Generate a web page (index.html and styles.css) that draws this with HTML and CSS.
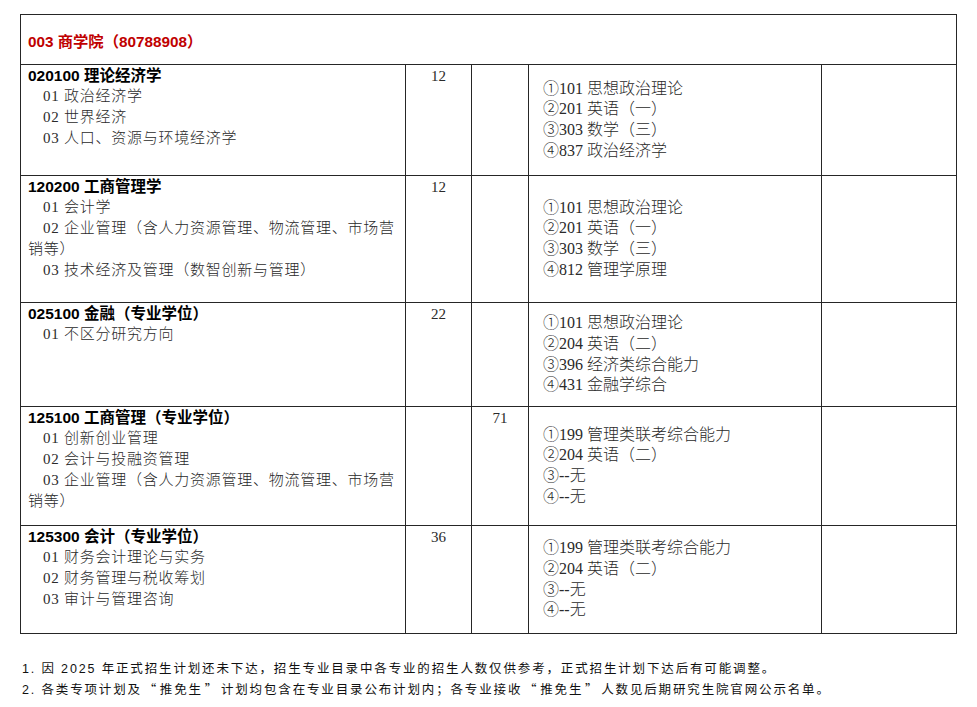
FILE: index.html
```html
<!DOCTYPE html>
<html lang="zh-CN">
<head>
<meta charset="utf-8">
<title>003 商学院</title>
<link rel="stylesheet" href="styles.css">
</head>
<body>
<div class="page">
<table class="plan">
  <colgroup>
    <col class="c-major"><col class="c-num"><col class="c-num2"><col class="c-exam"><col class="c-note">
  </colgroup>
  <tr class="head-row">
    <td colspan="5" class="dept">003 商学院（80788908）</td>
  </tr>
  <tr class="r1">
    <td class="major">
      <div class="mname">020100 理论经济学</div>
      <div class="dir">01 政治经济学</div>
      <div class="dir">02 世界经济</div>
      <div class="dir">03 人口、资源与环境经济学</div>
    </td>
    <td class="num">12</td>
    <td class="num"></td>
    <td class="exam">
      <div>①101 思想政治理论</div>
      <div>②201 英语（一）</div>
      <div>③303 数学（三）</div>
      <div>④837 政治经济学</div>
    </td>
    <td></td>
  </tr>
  <tr class="r2">
    <td class="major">
      <div class="mname">120200 工商管理学</div>
      <div class="dir">01 会计学</div>
      <div class="dir">02 企业管理（含人力资源管理、物流管理、市场营<br>销等）</div>
      <div class="dir">03 技术经济及管理（数智创新与管理）</div>
    </td>
    <td class="num">12</td>
    <td class="num"></td>
    <td class="exam">
      <div>①101 思想政治理论</div>
      <div>②201 英语（一）</div>
      <div>③303 数学（三）</div>
      <div>④812 管理学原理</div>
    </td>
    <td></td>
  </tr>
  <tr class="r3">
    <td class="major">
      <div class="mname">025100 金融（专业学位）</div>
      <div class="dir">01 不区分研究方向</div>
    </td>
    <td class="num">22</td>
    <td class="num"></td>
    <td class="exam">
      <div>①101 思想政治理论</div>
      <div>②204 英语（二）</div>
      <div>③396 经济类综合能力</div>
      <div>④431 金融学综合</div>
    </td>
    <td></td>
  </tr>
  <tr class="r4">
    <td class="major">
      <div class="mname">125100 工商管理（专业学位）</div>
      <div class="dir">01 创新创业管理</div>
      <div class="dir">02 会计与投融资管理</div>
      <div class="dir">03 企业管理（含人力资源管理、物流管理、市场营<br>销等）</div>
    </td>
    <td class="num"></td>
    <td class="num">71</td>
    <td class="exam">
      <div>①199 管理类联考综合能力</div>
      <div>②204 英语（二）</div>
      <div>③--无</div>
      <div>④--无</div>
    </td>
    <td></td>
  </tr>
  <tr class="r5">
    <td class="major">
      <div class="mname">125300 会计（专业学位）</div>
      <div class="dir">01 财务会计理论与实务</div>
      <div class="dir">02 财务管理与税收筹划</div>
      <div class="dir">03 审计与管理咨询</div>
    </td>
    <td class="num">36</td>
    <td class="num"></td>
    <td class="exam">
      <div>①199 管理类联考综合能力</div>
      <div>②204 英语（二）</div>
      <div>③--无</div>
      <div>④--无</div>
    </td>
    <td></td>
  </tr>
</table>
<div class="notes">
  <p>1. 因 2025 年正式招生计划还未下达，招生专业目录中各专业的招生人数仅供参考，正式招生计划下达后有可能调整。</p>
  <p>2. 各类专项计划及<span class="q">“</span>推免生<span class="q">”</span>计划均包含在专业目录公布计划内；各专业接收<span class="q">“</span>推免生<span class="q">”</span>人数见后期研究生院官网公示名单。</p>
</div>
</div>
</body>
</html>
```
FILE: styles.css
```css
html, body {
  margin: 0;
  padding: 0;
  background: #fff;
}
.page {
  padding: 14px 0 0 20px;
}
.plan {
  border-collapse: collapse;
  table-layout: fixed;
  width: 936px;
  font-family: "Liberation Serif", "Noto Sans CJK SC", serif;
  font-size: 15px;
  color: #2a2a2a;
  text-spacing-trim: space-all;
}
.c-major { width: 385px; }
.c-num { width: 66px; }
.c-num2 { width: 57px; }
.c-exam { width: 293px; }
.c-note { width: 135px; }
.plan td {
  border: 1px solid #262626;
  padding: 0;
  vertical-align: top;
}
.head-row { height: 50px; }
.plan td.dept {
  vertical-align: middle;
  padding: 0 7px 0 7px;
  color: #c00000;
  font-family: "Liberation Sans", "Noto Sans CJK SC", sans-serif;
  font-weight: 700;
  font-size: 15.3px;
}
.r1 { height: 111px; }
.r2 { height: 127px; }
.r3 { height: 104px; }
.r4 { height: 119px; }
.r5 { height: 108px; }
.plan td.major {
  padding: 0 7px 0 7px;
  line-height: 21px;
}
.mname {
  font-family: "Liberation Sans", "Noto Sans CJK SC", sans-serif;
  font-weight: 700;
  font-size: 15.5px;
  color: #000;
}
.dir {
  text-indent: 15px;
  font-weight: 300;
  white-space: nowrap;
  letter-spacing: 0.75px;
}
.plan td.num {
  text-align: center;
  padding-top: 1px;
  line-height: 21px;
}
.plan td.exam {
  vertical-align: middle;
  padding-left: 14px;
  font-size: 16px;
  line-height: 20.7px;
  font-weight: 300;
}
.notes {
  margin-top: 25px;
  padding-left: 2px;
  font-family: "Liberation Sans", "Noto Sans CJK SC", sans-serif;
  font-size: 12.5px;
  letter-spacing: 1.85px;
  line-height: 21px;
  color: #111;
  text-spacing-trim: space-all;
}
.notes p {
  margin: 0;
  height: 21px;
  white-space: nowrap;
}
.notes .q {
  font-family: "Noto Sans CJK SC", sans-serif;
  line-height: 0;
  padding: 0 1.8px;
}
```
